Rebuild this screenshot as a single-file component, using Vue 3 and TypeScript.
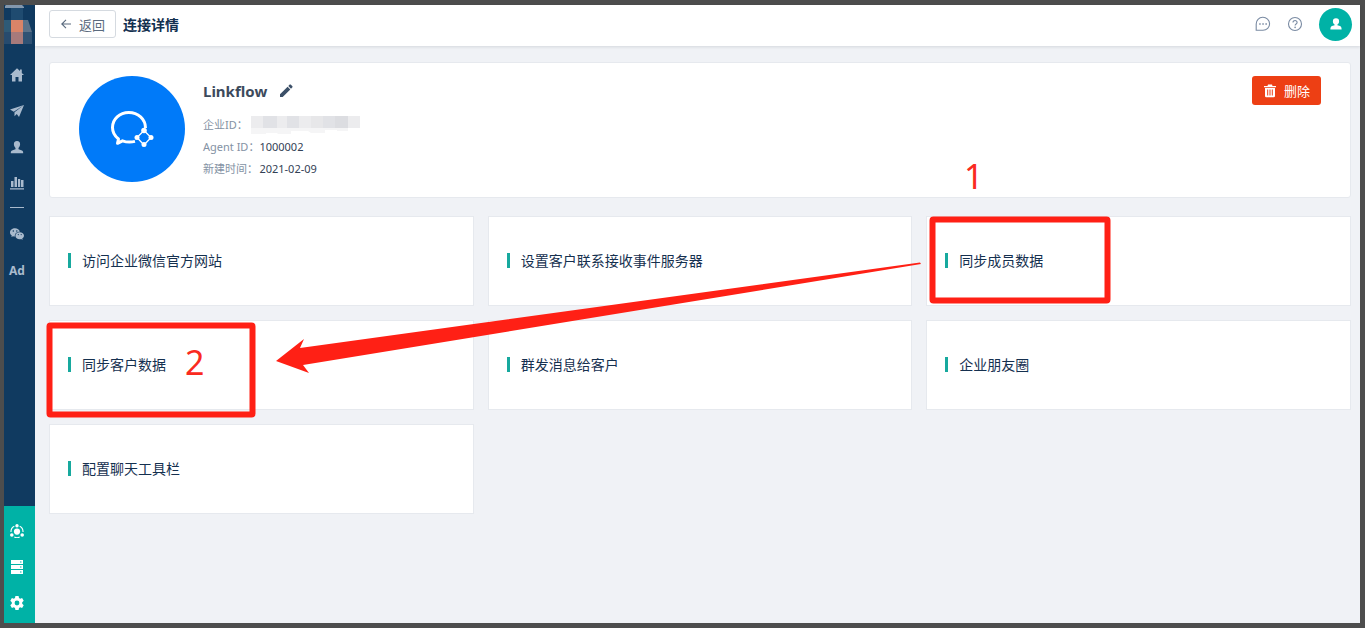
<script setup lang="ts">
interface Feature {
  id: string
  title: string
}

const features: Feature[] = [
  { id: 'site', title: '访问企业微信官方网站' },
  { id: 'server', title: '设置客户联系接收事件服务器' },
  { id: 'members', title: '同步成员数据' },
  { id: 'customers', title: '同步客户数据' },
  { id: 'broadcast', title: '群发消息给客户' },
  { id: 'moments', title: '企业朋友圈' },
  { id: 'toolbar', title: '配置聊天工具栏' },
]
</script>

<template>
  <div class="frame">
    <nav class="sidebar" aria-label="主导航">
      <div class="logo">
        <svg width="31" height="39" viewBox="0 0 31 39" aria-hidden="true">
          <path d="M1 1 2 0H18L20 2V3H1Z" fill="#8397ad" />
          <path d="M7 3h12v12H7z" fill="#1f4b70" />
          <path d="M0 15h7v12H0z" fill="#2e5a76" />
          <path d="M7 15h12v12H7z" fill="#d98468" />
          <path d="M19 15h5l4 12h-9z" fill="#5b7289" />
          <path d="M0 27h7v12H0z" fill="#274b6e" />
          <path d="M7 27h12v12H7z" fill="#a77a7b" />
          <path d="M19 27h9v12h-9z" fill="#2f5274" />
        </svg>
      </div>
      <div class="menu">
        <a href="#home" aria-label="首页">
          <svg width="14" height="14" viewBox="0 0 14 14"><path d="M7 .3 0 7h2v6.500h3.500V9h3v4.500H12V7h2l-2.200-2.100V1.500H10v1.600z" /></svg>
        </a>
        <a href="#send" aria-label="营销">
          <svg width="14" height="14" viewBox="0 0 14 14"><path d="M14 1 0 5.500l3.800 2.300zM14 1 4.500 8.300v4l2.300-2.200L9 13z" /></svg>
        </a>
        <a href="#user" aria-label="用户">
          <svg width="14" height="14" viewBox="0 0 14 14"><path d="M7 1C4.800 1 3.800 2.500 3.900 4.500 4 6 4.800 7.300 5.500 8v1.300L2 10.500c-1 .4-1.200 1.300-1.200 2.800h12.400c0-1.500-.2-2.400-1.200-2.800L8.500 9.300V8c.7-.7 1.500-2 1.600-3.500C10.200 2.500 9.200 1 7 1z" /></svg>
        </a>
        <a href="#chart" aria-label="分析">
          <svg width="14" height="14" viewBox="0 0 14 14"><path d="M1 5h2.500v6H1zM4.500 1H7v10H4.500zM8 3h2.200v8H8zM11 4h2.500v7H11zM0 12.200h14v1.300H0z" /></svg>
        </a>
        <span class="divider"></span>
        <a href="#wechat" aria-label="微信">
          <svg width="14" height="14" viewBox="0 0 14 14"><path fill-rule="evenodd" d="M5 1.300C2.200 1.300 0 3.100 0 5.400c0 1.300.7 2.400 1.800 3.200l-.4 1.500L3 9.200c.7.200 1.200.2 1.900.2-.5-2.500 1.600-4.700 4.900-4.700C9.400 2.700 7.400 1.300 5 1.300zM3.300 3.300a.7.700 0 1 1 0 1.500.7.700 0 0 1 0-1.500zm3.500 0a.7.700 0 1 1 0 1.500.7.700 0 0 1 0-1.500zM9.700 5.300c-2.400 0-4.300 1.500-4.300 3.500s1.900 3.500 4.300 3.500c.5 0 1-.1 1.500-.2l1.400.8-.4-1.300c1.100-.7 1.800-1.700 1.800-2.800 0-2-1.900-3.500-4.300-3.500zM8.300 7a.6.6 0 1 1 0 1.200.6.6 0 0 1 0-1.200zm2.900 0a.6.6 0 1 1 0 1.200.6.6 0 0 1 0-1.200z" /></svg>
        </a>
        <a href="#ad" class="ad">Ad</a>
      </div>
      <div class="menu menu-bottom">
        <a href="#connect" aria-label="连接">
          <svg width="14" height="14" viewBox="0 0 14 14"><circle cx="7" cy="7.600" r="3.100" /><circle cx="7" cy="1.700" r="1.700" /><circle cx="1.800" cy="11" r="1.800" /><circle cx="12.200" cy="11" r="1.800" /><path d="M4.300 2.300A6 6 0 0 0 1 8M9.700 2.300A6 6 0 0 1 13 8M4.300 13a6 6 0 0 0 5.400 0" fill="none" stroke="currentColor" stroke-width="1.100" /></svg>
        </a>
        <a href="#data" aria-label="数据">
          <svg width="14" height="14" viewBox="0 0 14 14"><path fill-rule="evenodd" d="M1 0h12v4H1zM1 5h12v4H1zM1 10h12v4H1zM10 1.500v1h1.500v-1zM10 6.500v1h1.500v-1zM10 11.500v1h1.500v-1z" /></svg>
        </a>
        <a href="#settings" aria-label="设置">
          <svg width="14" height="14" viewBox="0 0 14 14"><path fill-rule="evenodd" d="M5.400 0h3.200l.4 2 1.200.7 1.900-.7 1.600 2.800-1.500 1.400v1.600l1.500 1.400-1.600 2.800-1.900-.7-1.200.7-.4 2H5.400L5 12l-1.200-.7-1.900.7L.3 9.200l1.500-1.400V6.200L.3 4.800 1.900 2l1.900.7L5 2zM7 4.600a2.400 2.400 0 1 0 0 4.800 2.400 2.400 0 0 0 0-4.800z" /></svg>
        </a>
      </div>
    </nav>

    <div class="page">
      <header class="topbar">
        <button type="button" class="back">
          <svg width="10" height="10" viewBox="0 0 10 10" aria-hidden="true"><path d="M5 .8.800 5 5 9.200M1 5h9" fill="none" stroke="currentColor" stroke-width="1.100" /></svg>
          返回
        </button>
        <h1>连接详情</h1>
        <div class="tools">
          <button type="button" class="tool" aria-label="消息">
            <svg width="16" height="16" viewBox="0 0 16 16"><path d="M1.200 14.300V8A6.700 6.500 0 1 1 8 14.300z" fill="none" stroke="currentColor" stroke-width="1.100" /><path d="M4.200 7.300h1.500v1.500H4.200zM7.300 7.300h1.500v1.500H7.300zM10.400 7.300h1.500v1.500h-1.500z" fill="currentColor" /></svg>
          </button>
          <button type="button" class="tool" aria-label="帮助">
            <svg width="16" height="16" viewBox="0 0 16 16"><circle cx="8" cy="8" r="6.500" fill="none" stroke="currentColor" stroke-width="1.100" /><path d="M6 6.500c0-2.700 4.200-2.500 4.100 0C10.100 8 8.100 8 8.100 9.600" fill="none" stroke="currentColor" stroke-width="1.100" /><circle cx="8.100" cy="11.400" r=".8" fill="currentColor" /></svg>
          </button>
          <button type="button" class="avatar" aria-label="账户">
            <svg width="12" height="12" viewBox="0 0 12 12"><path d="M6 .2a3.100 3.100 0 0 0-3.100 3.200c0 1.400.7 2.500 1.700 3v.8L2 8C.8 8.400.4 9.500.4 11.500h11.200c0-2-.4-3.100-1.600-3.500l-2.600-.8v-.8c1-.5 1.700-1.600 1.700-3A3.100 3.100 0 0 0 6 .2z" fill="#fff" /></svg>
          </button>
        </div>
      </header>

      <main class="content">
        <section class="summary">
          <div class="brand">
            <svg width="106" height="106" viewBox="0 0 106 106" aria-hidden="true">
              <g fill="none" stroke="#fff" stroke-width="3" stroke-linejoin="round">
                <path d="M66.500 52C66.500 43 59 36.500 49.800 36.500S33.500 43 33.500 51.500c0 5 2.300 8.600 6 11.500l-1 4.300 5-2.500c4 1.500 8.500 1.600 12.500.6" />
                <path d="M65 54.500 72 61.500 65 69 58 61.500z" stroke-width="1.300" />
              </g>
              <g fill="#fff"><circle cx="65" cy="54.500" r="2.800" /><circle cx="72" cy="61.500" r="2.500" /><circle cx="65" cy="68.500" r="2.500" /><circle cx="58" cy="61.500" r="2.500" /></g>
            </svg>
          </div>
          <div class="details">
            <div class="name">
              <h2>Linkflow</h2>
              <button type="button" class="edit" aria-label="编辑">
                <svg width="14" height="14" viewBox="0 0 14 14"><path d="M1 10.300 8.600 2.700l2.700 2.700L3.700 13H1zM9.300 2 10.700.6Q11.200.2 11.700.6L13.400 2.300Q13.800 2.800 13.400 3.300L12 4.700z" fill="currentColor" /></svg>
              </button>
            </div>
            <dl>
              <dt>企业ID：</dt>
              <dd>
                <svg class="mask" width="110" height="20" viewBox="0 0 110 20" aria-label="已隐藏">
                  <path d="M0 2h109v12H0z" fill="#ececee" /><path d="M12 2h14v12H12zM36 2h12v12H36zM72 2h12v12H72z" fill="#e1e2e6" /><path d="M60 2h12v12H60z" fill="#e7e7e9" /><path d="M84 2h13v12H84z" fill="#dcdde1" /><path d="M0 14h97v3H86v-1H74v3H60l-3-2H40v4H28l-2-2H15v3H0z" fill="#f5f5f6" />
                </svg>
              </dd>
              <dt>Agent ID：</dt>
              <dd>1000002</dd>
              <dt>新建时间：</dt>
              <dd>2021-02-09</dd>
            </dl>
          </div>
          <button type="button" class="delete">
            <svg width="12" height="14" viewBox="0 0 12 14" aria-hidden="true"><path fill-rule="evenodd" d="M4 .5h4L8.500 2H12v1.300H0V2h3.500zM1 4h10v8q0 1.300-1.300 1.300H2.300Q1 13.300 1 12zM3.200 5.500v6h1v-6zM5.500 5.500v6h1v-6zM7.800 5.500v6h1v-6z" fill="#fff" /></svg>
            删除
          </button>
        </section>

        <section class="features">
          <a v-for="feature in features" :key="feature.id" class="feature" :href="'#' + feature.id">
            {{ feature.title }}
          </a>
        </section>
      </main>
    </div>

    <svg class="notes" width="1365" height="628" viewBox="0 0 1365 628" aria-hidden="true">
      <g fill="none" stroke="#ff2015" stroke-width="6" stroke-linejoin="round">
        <rect x="932.500" y="219.500" width="175" height="81" rx="1" />
        <rect x="49.500" y="325.500" width="203" height="89" rx="1" />
      </g>
      <path d="M276 361 304 339 300 348 920 262.500 921 264 303 365 309 373z" fill="#ff2015" />
      <g class="digits">
        <text x="964" y="189">1</text>
        <text x="185" y="375">2</text>
      </g>
    </svg>
  </div>
</template>

<style>
body {
  margin: 0;
}
</style>

<style scoped>
.frame {
  position: relative;
  display: flex;
  box-sizing: border-box;
  min-height: 100vh;
  border: 5px solid #4d4d4d;
  border-left-width: 4px;
  background: #f0f2f6;
  font-family: "Noto Sans", "Noto Sans CJK SC", sans-serif;
  font-size: 14px;
  color: #15304f;
}

.frame *,
.frame *::before {
  box-sizing: border-box;
}

a {
  color: inherit;
  text-decoration: none;
}

button {
  padding: 0;
  border: 0;
  background: none;
  font: inherit;
  color: inherit;
}

svg {
  display: block;
}

.sidebar {
  display: flex;
  flex-direction: column;
  flex: none;
  width: 31px;
  background: #103a60;
  color: #a9bacd;
}

.logo {
  height: 52px;
}

.menu {
  display: flex;
  flex-direction: column;
  align-items: center;
  padding-right: 5px;
}

.menu a {
  display: flex;
  align-items: center;
  justify-content: center;
  width: 26px;
  height: 36px;
}

.menu svg {
  fill: currentColor;
}

.divider {
  width: 14px;
  height: 1px;
  margin: 6px 0 8px;
  background: #a9bacd;
}

.menu .ad {
  font-size: 12px;
  font-weight: 700;
}

.menu-bottom {
  margin-top: auto;
  padding-top: 7px;
  padding-bottom: 2px;
  background: #00b2a6;
  color: #fff;
}

.page {
  flex: 1;
  min-width: 0;
}

.topbar {
  display: flex;
  align-items: center;
  height: 41px;
  padding: 0 8px 3px 14px;
  background: #fff;
  box-shadow: 0 1px 3px rgba(0, 21, 41, 0.12);
}

.back {
  display: flex;
  align-items: center;
  gap: 8px;
  height: 28px;
  padding: 0 10px 0 11px;
  border: 1px solid #d5dae0;
  border-radius: 3px;
  background: #fff;
  font-size: 13px;
  color: #5a6a7e;
}

h1 {
  margin: 0 0 0 7px;
  font-size: 14px;
  font-weight: 700;
  color: #12304f;
}

.tools {
  display: flex;
  align-items: center;
  gap: 16px;
  margin-left: auto;
}

.tool {
  color: #7a8ba3;
}

.avatar {
  display: flex;
  align-items: center;
  justify-content: center;
  width: 33px;
  height: 33px;
  border-radius: 50%;
  background: #00b2a6;
}

.content {
  padding: 16px 9px 16px 14px;
}

.summary {
  display: flex;
  align-items: flex-start;
  min-height: 136px;
  padding: 13px 29px;
  border: 1px solid #e6e9ee;
  border-radius: 3px;
  background: #fff;
}

.brand {
  flex: none;
  width: 106px;
  height: 106px;
  border-radius: 50%;
  background: #007af9;
}

.details {
  margin-left: 18px;
}

.name {
  display: flex;
  align-items: center;
  gap: 12px;
  height: 30px;
}

h2 {
  margin: 0;
  font-size: 15px;
  font-weight: 700;
  color: #3c4a5c;
}

.edit {
  color: #3c5068;
}

dl {
  display: grid;
  grid-template-columns: auto auto;
  grid-auto-rows: 22px;
  justify-content: start;
  margin: 8px 0 0;
  font-size: 11px;
  line-height: 22px;
}

dt {
  color: #8492a4;
}

dd {
  margin: 0;
  color: #334155;
}

.mask {
  margin-left: -8px;
}

.delete {
  display: flex;
  align-items: center;
  gap: 8px;
  height: 29px;
  margin-left: auto;
  padding: 0 11px 0 12px;
  border-radius: 3px;
  background: #ed3f14;
  font-size: 13px;
  color: #fff;
}

.features {
  display: grid;
  grid-template-columns: repeat(3, 1fr);
  gap: 14px;
  margin-top: 18px;
}

.feature {
  display: flex;
  align-items: center;
  gap: 11px;
  height: 90px;
  padding: 0 18px 2px;
  border: 1px solid #e6e9ee;
  background: #fff;
}

.feature::before {
  content: "";
  width: 3px;
  height: 15px;
  background: #17a99e;
}

.notes {
  position: absolute;
  top: -5px;
  left: -4px;
  pointer-events: none;
}

.digits {
  fill: #fa2a20;
  font-size: 34px;
}
</style>
